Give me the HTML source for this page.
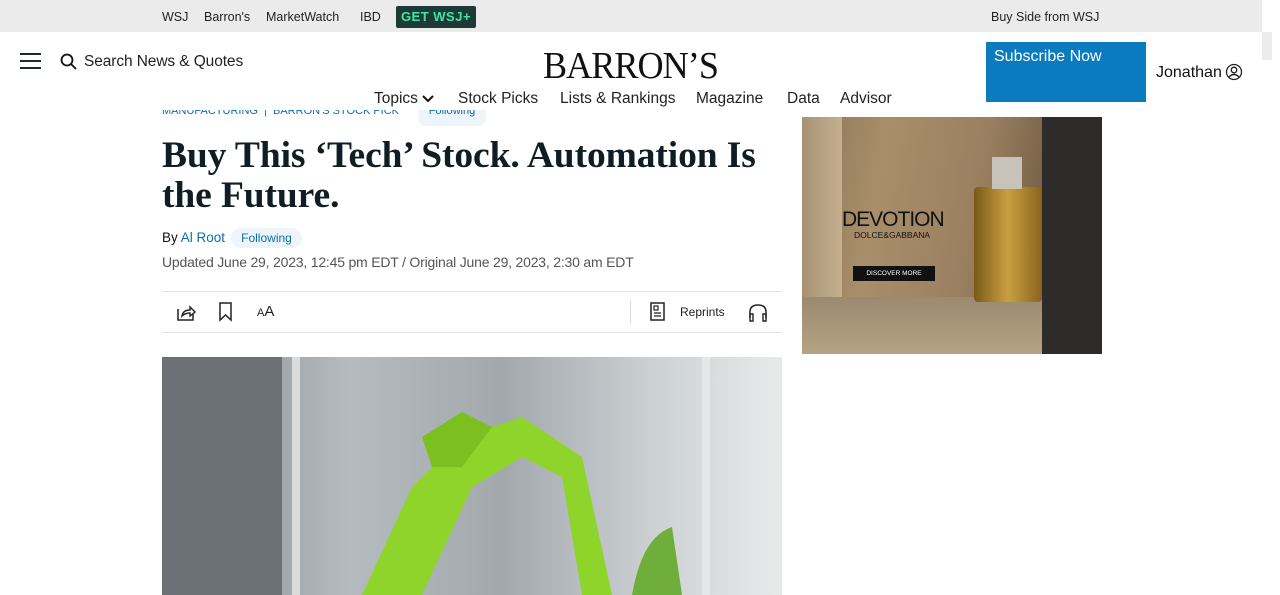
<!DOCTYPE html>
<html><head><meta charset="utf-8"><style>
*{margin:0;padding:0;box-sizing:border-box}
body{width:1280px;height:595px;overflow:hidden;background:#fff;font-family:"Liberation Sans",sans-serif;color:#111;position:relative}
.top{position:absolute;left:0;top:0;width:1262px;height:32px;background:#ebebeb;font-size:12.5px;color:#222}
.top span{position:absolute;top:10px}
.get{position:absolute;left:396px;top:6px;width:80px;height:22px;background:#1e3a35;color:#3ee6a5;font-weight:bold;font-size:13px;text-align:center;line-height:22px;border-radius:2px;letter-spacing:.5px}
.a{position:absolute;white-space:nowrap}
.nav{font-size:15.5px;color:#222;top:90px}
.sub{position:absolute;left:986px;top:42px;width:160px;height:60px;background:#0a7bbf;color:#fff;font-size:16px;padding:6px 8px}
h1{position:absolute;left:162px;top:136px;width:630px;font-family:"Liberation Serif",serif;font-size:37.5px;line-height:40px;font-weight:bold;color:#0f1e24;letter-spacing:-.1px}
.line{position:absolute;left:162px;width:620px;height:1px;background:#e2e2e2}
.ad{position:absolute;left:802px;top:117px;width:300px;height:237px;background:linear-gradient(100deg,#8a7355 0%,#a88e6a 25%,#9a8060 55%,#6e5a40 80%,#3a3530 100%);overflow:hidden}
.img{position:absolute;left:162px;top:357px;width:620px;height:238px;background:linear-gradient(90deg,#7d8388,#b5bcc0 30%,#a2a9ad 55%,#cdd2d4 80%,#e8eaea);overflow:hidden}
</style></head><body>
<div class="top">
<span style="left:162px">WSJ</span><span style="left:204px">Barron's</span><span style="left:266px">MarketWatch</span><span style="left:360px">IBD</span>
<div class="get">GET WSJ+</div>
<span style="left:991px">Buy Side from WSJ</span>
</div>
<div style="position:absolute;left:1262px;top:32px;width:10px;height:28px;background:#ececec"></div>
<svg class="a" style="left:20px;top:52px" width="22" height="18"><path d="M0 2H21M0 9H21M0 16H21" stroke="#1b2a33" stroke-width="2"/></svg>
<svg class="a" style="left:60px;top:53px" width="18" height="18"><circle cx="7" cy="7" r="5.5" stroke="#111" stroke-width="1.8" fill="none"/><path d="M11 11L16 16" stroke="#111" stroke-width="1.8"/></svg>
<div class="a" style="left:84px;top:53px;font-size:15.5px;color:#222;letter-spacing:-.1px">Search News &amp; Quotes</div>
<div class="a" style="left:543px;top:44px;font-family:'Liberation Serif',serif;font-size:38px;letter-spacing:-1px;color:#111;transform:scaleX(.95);transform-origin:left">BARRON’S</div>
<div class="a nav" style="left:374px">Topics <svg width="12" height="9"><path d="M1 2L6 7L11 2" stroke="#111" stroke-width="2" fill="none"/></svg></div>
<div class="a nav" style="left:458px">Stock Picks</div>
<div class="a nav" style="left:560px">Lists &amp; Rankings</div>
<div class="a nav" style="left:696px">Magazine</div>
<div class="a nav" style="left:787px">Data</div>
<div class="a nav" style="left:840px;width:52px;overflow:hidden;height:13px">Advisor</div>
<div class="sub">Subscribe Now</div>
<div class="a" style="left:1156px;top:64px;font-size:16px;color:#111">Jonathan</div>
<svg class="a" style="left:1225px;top:63px" width="18" height="18"><circle cx="9" cy="9" r="7.5" stroke="#222" stroke-width="1.3" fill="none"/><circle cx="9" cy="7" r="2.8" stroke="#222" stroke-width="1.3" fill="none"/><path d="M4 14Q9 9 14 14" stroke="#222" stroke-width="1.3" fill="none"/></svg>
<div class="a" style="left:162px;top:110px;height:8px;overflow:hidden;font-size:11px;color:#0a6eb0"><div style="margin-top:-5px">MANUFACTURING &nbsp;| &nbsp;BARRON'S STOCK PICK</div></div>
<div class="a" style="left:418px;top:110px;width:68px;height:16px;background:#eef5fa;border-radius:0 0 8px 8px;overflow:hidden;font-size:11px;color:#0a6eb0;text-align:center"><div style="margin-top:-5px">Following</div></div>
<h1>Buy This ‘Tech’ Stock. Automation Is the Future.</h1>
<div class="a" style="left:162px;top:230px;font-size:13.5px">By <span style="color:#0a6eb0">Al Root</span></div>
<div class="a" style="left:231px;top:228px;width:71px;height:20px;background:#eef5fa;border-radius:10px;font-size:12px;color:#0a6eb0;text-align:center;line-height:20px">Following</div>
<div class="a" style="left:162px;top:254px;font-size:14px;color:#555;letter-spacing:-.2px">Updated June 29, 2023, 12:45 pm EDT / Original June 29, 2023, 2:30 am EDT</div>
<div class="line" style="top:291px"></div>
<div class="line" style="top:332px"></div>
<svg class="a" style="left:176px;top:302px" width="20" height="20"><path d="M2 7V18H17V12" stroke="#222" stroke-width="1.5" fill="none"/><path d="M6 14Q7 8 14 8V5L19 10L14 14V11Q9 11 6 14Z" stroke="#222" stroke-width="1.4" fill="none"/></svg>
<svg class="a" style="left:218px;top:302px" width="16" height="20"><path d="M2 1H13V18L7.5 13L2 18Z" stroke="#222" stroke-width="1.5" fill="none"/></svg>
<div class="a" style="left:257px;top:303px;font-size:15px;color:#222"><span style="font-size:11px">A</span>A</div>
<div class="a" style="left:630px;top:300px;width:1px;height:24px;background:#ddd"></div>
<svg class="a" style="left:650px;top:302px" width="16" height="20"><rect x="1" y="1" width="13" height="17" stroke="#222" stroke-width="1.5" fill="none"/><rect x="4" y="4" width="4" height="4" stroke="#222" stroke-width="1.2" fill="none"/><path d="M4 11H11M4 14H11" stroke="#222" stroke-width="1.2"/></svg>
<div class="a" style="left:680px;top:305px;font-size:12px;color:#222">Reprints</div>
<svg class="a" style="left:748px;top:302px" width="20" height="20"><path d="M2 16V10Q2 3 10 3Q18 3 18 10V16" stroke="#222" stroke-width="1.5" fill="none"/><path d="M2 12H5V19H2ZM15 12H18V19H15Z" stroke="#222" stroke-width="1.4" fill="none"/></svg>
<div class="ad">
<div style="position:absolute;left:0;top:0;width:40px;height:237px;background:linear-gradient(90deg,#a89274,#c4b08e)"></div>
<div style="position:absolute;left:0;top:180px;width:300px;height:57px;background:linear-gradient(#9b8a70,#b6a384)"></div>
<div style="position:absolute;left:240px;top:0;width:60px;height:237px;background:#2e2c2a"></div>
<div style="position:absolute;left:40px;top:91px;font-size:21px;color:#111;letter-spacing:-1px">DEVOTION</div>
<div style="position:absolute;left:52px;top:113px;font-size:8.5px;color:#111">DOLCE&amp;GABBANA</div>
<div style="position:absolute;left:51px;top:149px;width:82px;height:15px;background:#111;color:#fff;font-size:6.5px;text-align:center;line-height:15px">DISCOVER MORE</div>
<div style="position:absolute;left:172px;top:70px;width:68px;height:115px;background:linear-gradient(90deg,#7a5a18,#c9a040,#8a6420);border-radius:4px"></div>
<div style="position:absolute;left:190px;top:40px;width:30px;height:32px;background:#c7c3bb"></div>
</div>
<div class="img">
<div style="position:absolute;left:0;top:0;width:120px;height:238px;background:#6c7176"></div>
<div style="position:absolute;left:130px;top:0;width:8px;height:238px;background:#d9dcdd"></div>
<div style="position:absolute;left:540px;top:0;width:8px;height:238px;background:#e6e8e8"></div>
<svg style="position:absolute;left:0;top:0" width="620" height="238"><path d="M200 238L250 130L300 80L360 60L420 100L450 238H420L400 120L360 100L310 130L260 238Z" fill="#8fd42a"/><path d="M260 80L300 55L330 70L300 110L270 110Z" fill="#7cc01f"/><path d="M470 238Q480 180 510 170L520 238Z" fill="#6fae3a"/></svg>
</div>
</body></html>
